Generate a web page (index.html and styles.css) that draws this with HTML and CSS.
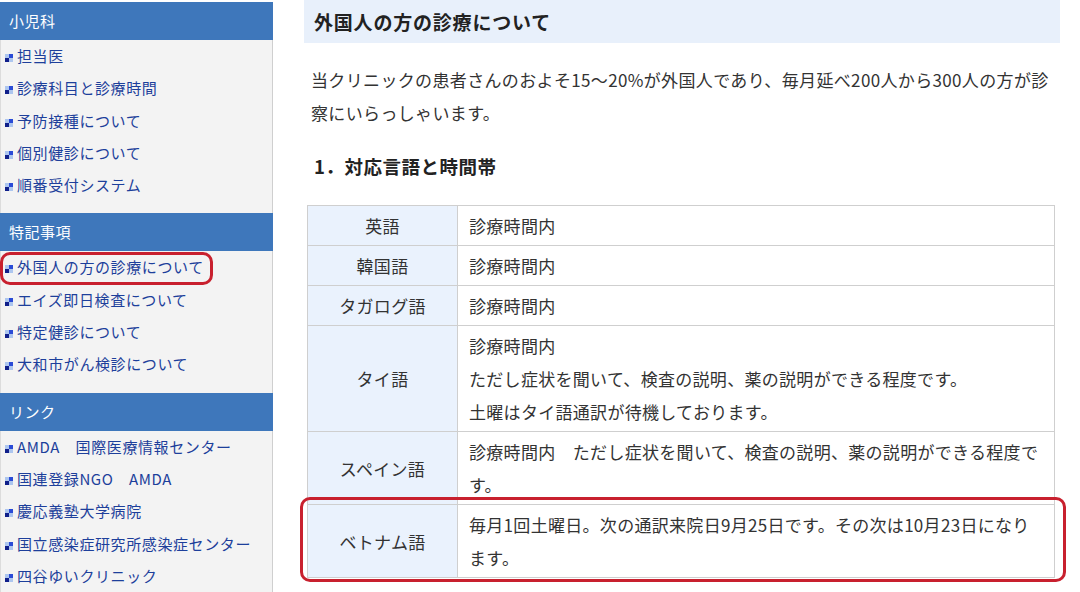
FILE: index.html
```html
<!DOCTYPE html>
<html lang="ja">
<head>
  <meta charset="UTF-8" />
  <meta name="viewport" content="width=device-width, initial-scale=1.0" />
  <title>外国人の方の診療について</title>
  <link rel="stylesheet" href="styles.css">
</head>
<body>
  <div class="page">
    <aside class="side">
      <h2 class="side-title">小児科</h2>
      <ul class="side-list">
        <li><a href="#">担当医</a></li>
        <li><a href="#">診療科目と診療時間</a></li>
        <li><a href="#">予防接種について</a></li>
        <li><a href="#">個別健診について</a></li>
        <li><a href="#">順番受付システム</a></li>
      </ul>

      <h2 class="side-title">特記事項</h2>
      <ul class="side-list">
        <li class="current"><a href="#">外国人の方の診療について</a></li>
        <li><a href="#">エイズ即日検査について</a></li>
        <li><a href="#">特定健診について</a></li>
        <li><a href="#">大和市がん検診について</a></li>
      </ul>

      <h2 class="side-title">リンク</h2>
      <ul class="side-list">
        <li><a href="#">AMDA　国際医療情報センター</a></li>
        <li><a href="#">国連登録NGO　AMDA</a></li>
        <li><a href="#">慶応義塾大学病院</a></li>
        <li><a href="#">国立感染症研究所感染症センター</a></li>
        <li><a href="#">四谷ゆいクリニック</a></li>
      </ul>
    </aside>

    <main class="content">
      <h1 class="page-title">外国人の方の診療について</h1>
      <p class="lead">当クリニックの患者さんのおよそ15～20%が外国人であり、毎月延べ200人から300人の方が診<br>察にいらっしゃいます。</p>

      <h3 class="sec-title">1．対応言語と時間帯</h3>
      <div class="table-wrap">
        <table class="lang-table">
          <tr>
            <th>英語</th>
            <td>診療時間内</td>
          </tr>
          <tr>
            <th>韓国語</th>
            <td>診療時間内</td>
          </tr>
          <tr>
            <th>タガログ語</th>
            <td>診療時間内</td>
          </tr>
          <tr>
            <th>タイ語</th>
            <td>診療時間内<br>ただし症状を聞いて、検査の説明、薬の説明ができる程度です。<br>土曜はタイ語通訳が待機しております。</td>
          </tr>
          <tr>
            <th>スペイン語</th>
            <td>診療時間内　ただし症状を聞いて、検査の説明、薬の説明ができる程度で<br>す。</td>
          </tr>
          <tr>
            <th>ベトナム語</th>
            <td>毎月1回土曜日。次の通訳来院日9月25日です。その次は10月23日になり<br>ます。</td>
          </tr>
        </table>
        <div class="note-mark"></div>
      </div>
    </main>
  </div>
</body>
</html>
```

FILE: styles.css
```css
body {
  margin: 0;
  font-family: "Noto Sans CJK JP", sans-serif;
  color: #333;
  background: #fff;
}
.page {
  display: flex;
  align-items: flex-start;
}

/* sidebar */
.side {
  width: 273px;
  flex-shrink: 0;
  margin-top: 2px;
  margin-right: 31px;
}
.side-title {
  margin: 0;
  height: 38px;
  line-height: 38px;
  padding-left: 9px;
  background: #3e77bb;
  color: #fff;
  font-size: 15px;
  font-weight: normal;
  letter-spacing: 0.5px;
}
.side-list {
  list-style: none;
  margin: 0;
  padding: 0 0 12px;
  background: #f3f3f3;
  border-left: 1px solid #dcdcdc;
  border-right: 1px solid #cfcfcf;
}
.side-list li {
  position: relative;
  height: 32.3px;
  line-height: 32.3px;
  padding-left: 4px;
  font-size: 15px;
  letter-spacing: 0.6px;
  white-space: nowrap;
}
.side-list li::before {
  content: "";
  display: inline-block;
  width: 8px;
  height: 8px;
  margin-right: 4px;
  vertical-align: 0;
  background:
    linear-gradient(#2a4bd6, #2a4bd6) right top / 50% 50% no-repeat,
    linear-gradient(#101f8a, #101f8a) left bottom / 50% 50% no-repeat,
    #adc6ef;
}
.side-list a {
  color: #1d3f9b;
  text-decoration: none;
}
.side-list li.current::after {
  content: "";
  position: absolute;
  left: -1px;
  top: 1px;
  width: 213px;
  height: 33px;
  box-sizing: border-box;
  border: 3px solid #c8202e;
  border-radius: 10px;
}

/* main */
.content {
  width: 756px;
  flex-shrink: 0;
}
.page-title {
  margin: 0;
  height: 43px;
  line-height: 43px;
  padding-left: 10px;
  background: #e8f0fb;
  color: #222;
  font-size: 19px;
  font-weight: bold;
  letter-spacing: 0.8px;
}
.lead {
  margin: 20px 0 0;
  padding: 0 2px 0 7px;
  font-size: 17px;
  line-height: 33px;
  letter-spacing: 0.35px;
  white-space: nowrap;
}
.sec-title {
  margin: 21px 0 0;
  padding-left: 10px;
  color: #222;
  font-size: 18.5px;
  line-height: 33px;
  font-weight: bold;
  letter-spacing: 0.5px;
}
.table-wrap {
  position: relative;
  width: 748px;
  margin: 22px 0 0 3px;
}
.lang-table {
  width: 100%;
  border-collapse: collapse;
  font-size: 17px;
  line-height: 33px;
  letter-spacing: 0.3px;
}
.lang-table th,
.lang-table td {
  border: 1px solid #cfcfcf;
  padding: 3px 4px 3px 11px;
  vertical-align: middle;
  white-space: nowrap;
}
.lang-table th {
  width: 133px;
  padding: 3px 8px;
  background: #eaf2fd;
  font-weight: normal;
  text-align: center;
}
.note-mark {
  position: absolute;
  left: -7px;
  top: 292px;
  width: 766px;
  height: 85px;
  box-sizing: border-box;
  border: 3px solid #c8202e;
  border-radius: 10px;
  pointer-events: none;
}
```
